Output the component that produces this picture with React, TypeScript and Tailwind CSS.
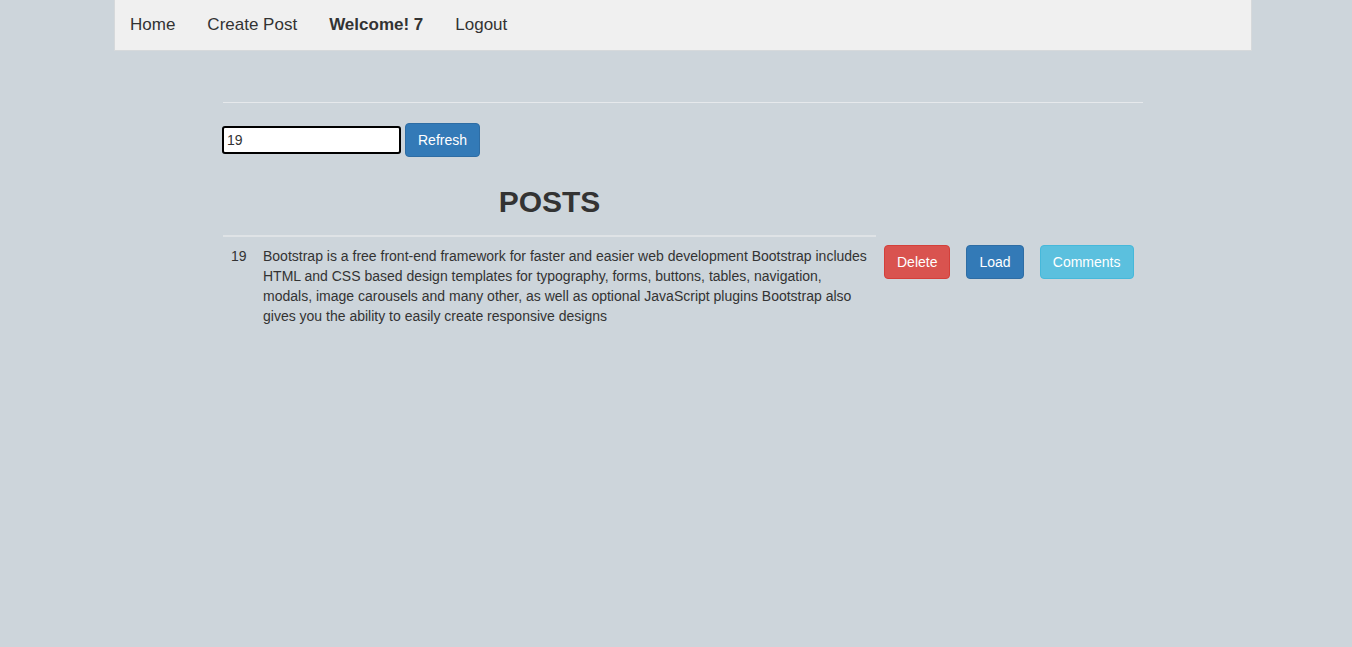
import React from "react";

export default function App() {
  return (
    <div className="min-h-screen w-full bg-[#cdd5db] text-[#333] font-['Liberation_Sans',Arial,sans-serif]">
      <nav className="ml-[114px] flex h-[51px] w-[1138px] items-center border border-t-0 border-[#d6d9db] bg-[#f0f0f0] pl-[15px] text-[17px]">
        <a className="mr-[32px] text-[#333]">Home</a>
        <a className="mr-[32px] text-[#333]">Create Post</a>
        <span className="mr-[32px] font-bold text-[#333]">Welcome! 7</span>
        <a className="text-[#333]">Logout</a>
      </nav>
      <div className="ml-[223px] w-[920px] pt-[51px]">
        <div className="h-px w-full bg-[#e6e9ec]" />
        <div className="mt-[20px] flex items-center gap-[4px] ml-[-1px]">
          <input
            defaultValue="19"
            className="h-[28px] w-[179px] rounded-[3px] border-2 border-black bg-white px-[3px] text-[14px] text-[#333] outline-none"
          />
          <button className="h-[34px] w-[75px] rounded-[4px] border border-[#2e6da4] bg-[#337ab7] text-[14px] text-white">
            Refresh
          </button>
        </div>
        <table className="mt-[28px] border-collapse text-[14px] leading-[20px]">
          <thead>
            <tr>
              <th colSpan={2} className="w-[653px] border-b-2 border-[#dfe3e6] pb-[17px] text-center text-[30px] font-bold leading-[33px]">
                POSTS
              </th>
            </tr>
          </thead>
          <tbody>
            <tr className="align-top">
              <td className="w-[32px] px-[8px] pt-[9px] pb-[8px]">19</td>
              <td className="w-[621px] px-[8px] pt-[9px] pb-[8px]">
                Bootstrap is a free front-end framework for faster and easier web development Bootstrap includes HTML and CSS based design templates for typography, forms, buttons, tables, navigation, modals, image carousels and many other, as well as optional JavaScript plugins Bootstrap also gives you the ability to easily create responsive designs
              </td>
              <td className="px-[8px] pt-[9px] pb-[8px]">
                <button className="h-[34px] rounded-[4px] border border-[#d43f3a] bg-[#d9534f] px-[12px] text-white">Delete</button>
              </td>
              <td className="px-[8px] pt-[9px] pb-[8px]">
                <button className="h-[34px] rounded-[4px] border border-[#2e6da4] bg-[#337ab7] px-[12px] text-white">Load</button>
              </td>
              <td className="px-[8px] pt-[9px] pb-[8px]">
                <button className="h-[34px] w-[94px] rounded-[4px] border border-[#46b8da] bg-[#5bc0de] text-white">Comments</button>
              </td>
            </tr>
          </tbody>
        </table>
      </div>
    </div>
  );
}
